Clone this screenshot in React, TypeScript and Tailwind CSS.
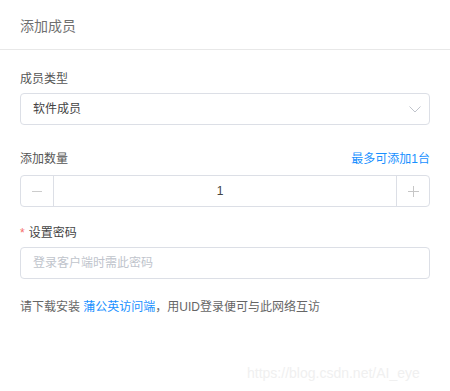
import React from "react";

const font = { fontFamily: '"Liberation Sans", "Noto Sans CJK SC", sans-serif' };

function Label({ children, right }: { children: React.ReactNode; right?: React.ReactNode }) {
  return (
    <div className="flex justify-between items-center h-5 leading-5 text-[12px] text-[#555]">
      <span>{children}</span>
      {right}
    </div>
  );
}

export default function App() {
  return (
    <div className="relative w-[450px] h-[391px] bg-white overflow-hidden" style={font}>
      <div className="h-[50px] px-5 pt-[3px] flex items-center text-[14px] text-[#707070] border-b border-[#e8e8e8]">
        添加成员
      </div>

      <div className="px-5 pt-[19px]">
        <Label>成员类型</Label>
        <div className="mt-1 h-8 flex items-center justify-between border border-[#dcdfe6] rounded pl-3 pr-[8px] text-[12px] text-[#444]">
          <span>软件成员</span>
          <svg width="12" height="7" viewBox="0 0 12 7" fill="none">
            <path d="M0.5 0.5 L6 6 L11.5 0.5" stroke="#c0c4cc" strokeWidth="1" />
          </svg>
        </div>

        <div className="mt-6">
          <Label right={<span className="text-[#1890ff]">最多可添加1台</span>}>添加数量</Label>
        </div>
        <div className="mt-[6px] h-8 flex border border-[#dcdfe6] rounded text-[12px] text-[#444]">
          <div className="w-[33px] flex items-center justify-center border-r border-[#dcdfe6]">
            <svg width="10" height="10" viewBox="0 0 10 10">
              <path d="M0 5.5 H10" stroke="#ccc" strokeWidth="1" />
            </svg>
          </div>
          <div className="flex-1 flex items-center justify-center pr-[10px]">1</div>
          <div className="w-[33px] flex items-center justify-center border-l border-[#dcdfe6]">
            <svg width="11" height="11" viewBox="0 0 11 11">
              <path d="M0 5.5 H11 M5.5 0 V11" stroke="#c6c6c6" strokeWidth="1" />
            </svg>
          </div>
        </div>

        <div className="mt-4">
          <Label>
            <span className="text-[#f56c6c] mr-1">*</span>
            <span className="text-[#444]">设置密码</span>
          </Label>
        </div>
        <div className="mt-1 h-8 flex items-center border border-[#dcdfe6] rounded pl-3 text-[12px] text-[#c0c4cc]">
          登录客户端时需此密码
        </div>

        <div className="mt-[18px] h-5 leading-5 text-[12px] text-[#666]">
          请下载安装 <span className="text-[#1890ff]">蒲公英访问端</span>，用UID登录便可与此网络互访
        </div>
      </div>

      <div className="absolute left-[247px] top-[364px] text-[14px] leading-[18px] text-[#f0f0f0]">
        https://blog.csdn.net/AI_eye
      </div>
    </div>
  );
}
